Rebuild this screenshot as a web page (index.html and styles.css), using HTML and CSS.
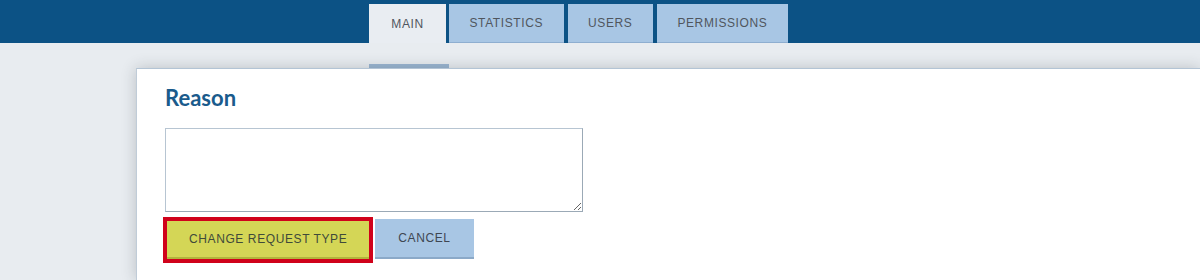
FILE: index.html
```html
<!DOCTYPE html>
<html lang="en">
<head>
    <meta charset="UTF-8">
    <meta name="viewport" content="width=device-width, initial-scale=1.0">
    <title>Change Request Type</title>
    <link rel="stylesheet" href="styles.css">
</head>
<body>

    <header class="topbar">
        <nav class="tabs">
            <a class="tab active" href="#">MAIN</a>
            <a class="tab" href="#">STATISTICS</a>
            <a class="tab" href="#">USERS</a>
            <a class="tab" href="#">PERMISSIONS</a>
        </nav>
    </header>

    <main class="page">
        <div class="tab-indicator"></div>

        <section class="card">
            <h2 class="card-title">Reason</h2>
            <textarea class="reason-input"></textarea>

            <div class="actions">
                <button class="btn btn-primary">CHANGE REQUEST TYPE</button>
                <button class="btn btn-secondary">CANCEL</button>
            </div>
        </section>
    </main>

</body>
</html>
```

FILE: styles.css
```css
body {
    font-family: 'Liberation Sans', Arial, sans-serif;
    background-color: #e8ecf0;
    margin: 0;
    padding: 0;
    height: 280px;
    overflow: hidden;
}

.topbar {
    height: 43px;
    background-color: #0c5285;
    display: flex;
    align-items: flex-end;
    padding-left: 369px;
}

.tabs {
    display: flex;
    gap: 4px;
}

.tab {
    display: flex;
    align-items: center;
    height: 38px;
    padding: 0 20.5px;
    background-color: #a8c6e4;
    border-bottom: 1px solid #8eaed0;
    color: #50565e;
    font-size: 12px;
    letter-spacing: 0.6px;
    text-decoration: none;
}

.tab.active {
    height: 39px;
    padding: 0 22.3px;
    border-bottom: none;
    background-color: #e9edf2;
    margin-right: -1px;
}

.page {
    padding-top: 21px;
}

.tab-indicator {
    width: 80px;
    height: 4px;
    margin-left: 369px;
    background-color: #9bb6d2;
}

.card {
    margin-left: 136px;
    height: 195px;
    background-color: #fff;
    border-top: 1px solid #b3c4d5;
    border-left: 1px solid #c0ccd8;
    box-shadow: 0 0 14px rgba(40, 50, 60, 0.24);
    padding: 16px 28px 0;
}

.card-title {
    margin: 0;
    font-family: Lato, 'Open Sans', sans-serif;
    font-size: 22px;
    font-weight: 700;
    line-height: 26px;
    color: #1a5b8c;
}

.reason-input {
    display: block;
    box-sizing: border-box;
    width: 418px;
    height: 84px;
    margin: 17px 0 0;
    border: 1px solid #b7c5d2;
    border-right-color: #9ba9b6;
    border-bottom-color: #9ba9b6;
    border-radius: 0;
    background: #fff;
    resize: both;
    outline: none;
}

.actions {
    display: flex;
    align-items: flex-end;
    gap: 6px;
    margin-top: 7px;
    margin-left: 2px;
}

.btn {
    box-sizing: border-box;
    border: none;
    border-radius: 0;
    padding: 0 23px;
    font-family: 'Liberation Sans', Arial, sans-serif;
    font-size: 12px;
    letter-spacing: 0.6px;
    color: #3e4652;
    cursor: pointer;
}

.btn-primary {
    height: 38px;
    padding: 0 22px;
    background-color: #d4d656;
    border-bottom: 2px solid #b3b43c;
    color: #3f4a3a;
    outline: 4px solid #d0021b;
}

.btn-secondary {
    height: 40px;
    background-color: #a8c6e4;
    border-bottom: 2px solid #8ba9c8;
}
```
